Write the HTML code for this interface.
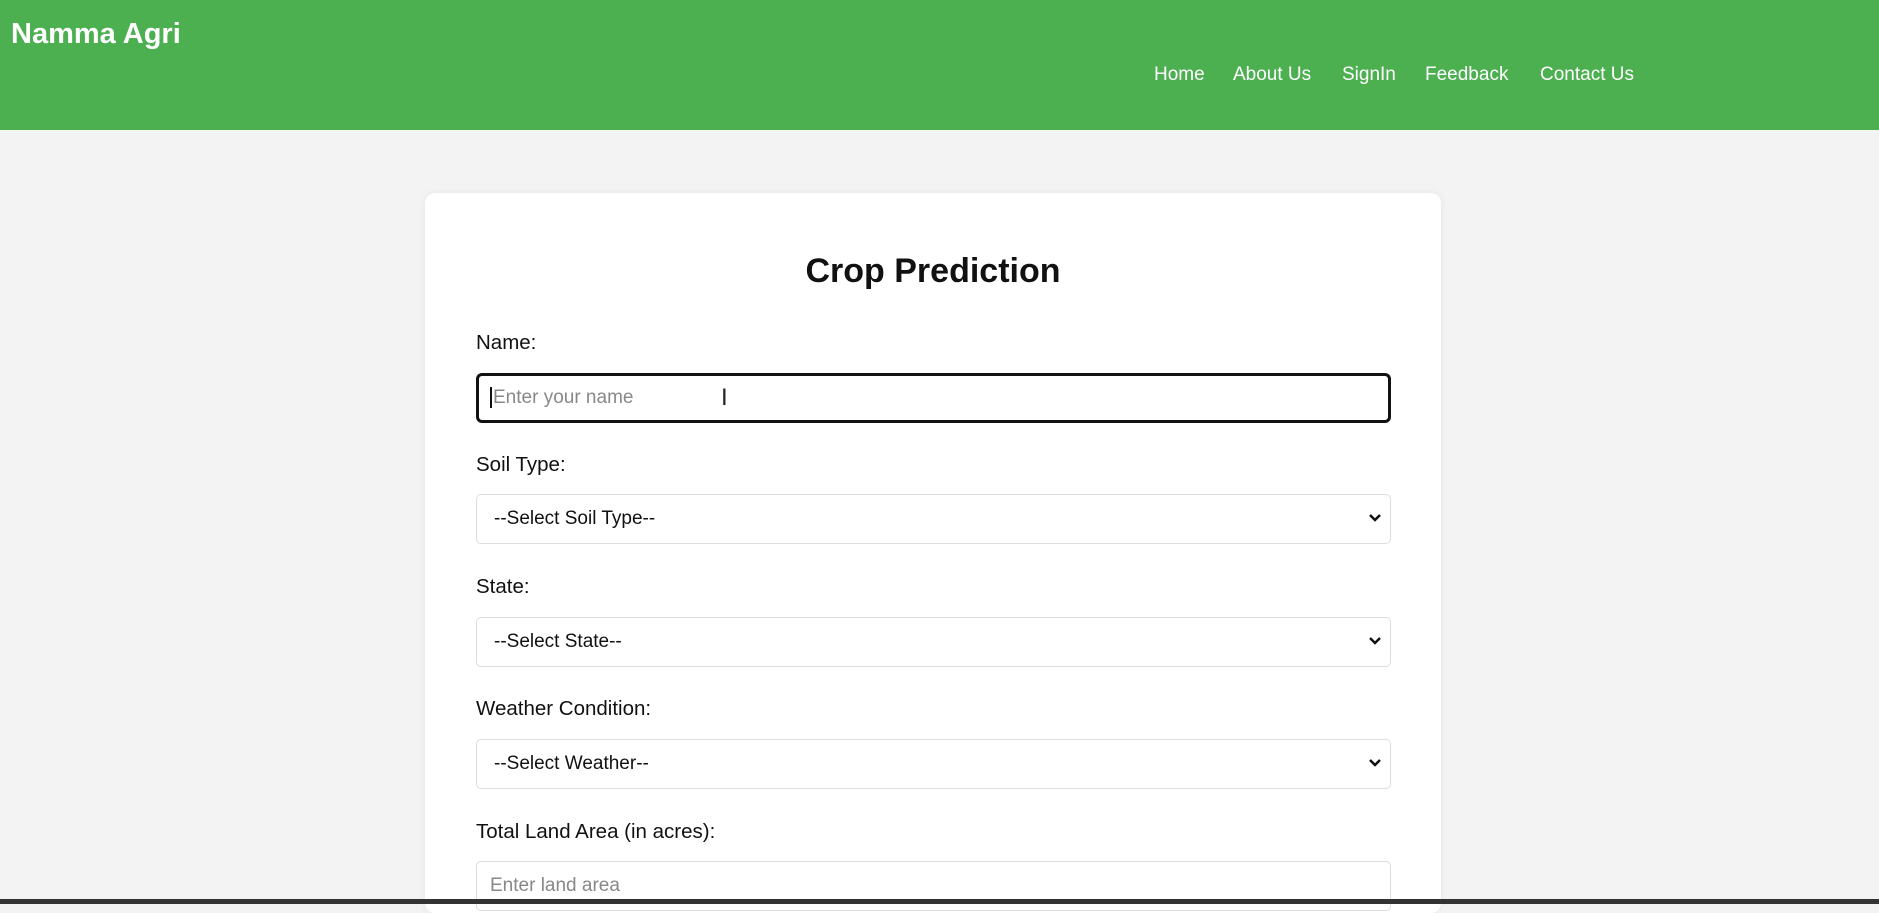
<!DOCTYPE html>
<html><head><meta charset="utf-8"><style>
*{box-sizing:border-box;margin:0;padding:0}
body{width:1879px;height:904px;overflow:hidden;background:#f3f3f3;font-family:"Liberation Sans",Arial,sans-serif;position:relative}
.hdr{position:absolute;left:0;top:0;width:1879px;height:130px;background:#4caf50}
.logo{position:absolute;left:11px;top:18px;color:#fff;font-weight:bold;font-size:29px}
.nav{position:absolute;top:64px;color:#fff;font-size:19px}
.card{position:absolute;left:425px;top:193px;width:1016px;height:720px;background:#fff;border-radius:10px;box-shadow:0 0 8px rgba(0,0,0,.06)}
h1{position:absolute;left:425px;width:1016px;top:252px;text-align:center;font-size:34px;font-weight:bold;color:#111}
.lbl{position:absolute;left:476px;font-size:20.5px;color:#111}
.box{position:absolute;left:476px;width:915px;height:50px;border:1px solid #ddd;border-radius:5px;background:#fff;font-size:19px;color:#111;padding-left:17px;line-height:48px}
.box svg{position:absolute;right:8px;top:18px}
.ph{color:#888;padding-left:13px}
</style></head><body>
<div class="hdr">
<div class="logo">Namma Agri</div>
<div class="nav" style="left:1154px">Home</div>
<div class="nav" style="left:1233px">About Us</div>
<div class="nav" style="left:1342px">SignIn</div>
<div class="nav" style="left:1425px">Feedback</div>
<div class="nav" style="left:1540px">Contact Us</div>
</div>
<div class="card"></div>
<h1>Crop Prediction</h1>
<div class="lbl" style="top:331px">Name:</div>
<div class="box ph" style="top:373px;height:50px;border:3px solid #111;border-radius:6px;line-height:44px;color:#888;padding-left:11px"><span style="border-left:2px solid #111;padding-left:1px">Enter your name</span>
<span style="position:absolute;left:242px;top:0;color:#222;font-size:24px">I</span></div>
<div class="lbl" style="top:453px">Soil Type:</div>
<div class="box" style="top:494px">--Select Soil Type--<svg width="14" height="10" viewBox="0 0 14 10"><path d="M2 2l5 5 5-5" stroke="#111" stroke-width="2.5" fill="none"/></svg></div>
<div class="lbl" style="top:575px">State:</div>
<div class="box" style="top:617px">--Select State--<svg width="14" height="10" viewBox="0 0 14 10"><path d="M2 2l5 5 5-5" stroke="#111" stroke-width="2.5" fill="none"/></svg></div>
<div class="lbl" style="top:697px">Weather Condition:</div>
<div class="box" style="top:739px">--Select Weather--<svg width="14" height="10" viewBox="0 0 14 10"><path d="M2 2l5 5 5-5" stroke="#111" stroke-width="2.5" fill="none"/></svg></div>
<div class="lbl" style="top:820px">Total Land Area (in acres):</div>
<div class="box ph" style="top:861px">Enter land area</div>
<div style="position:absolute;left:0;top:899px;width:1879px;height:5px;background:#333"></div>
</body></html>
